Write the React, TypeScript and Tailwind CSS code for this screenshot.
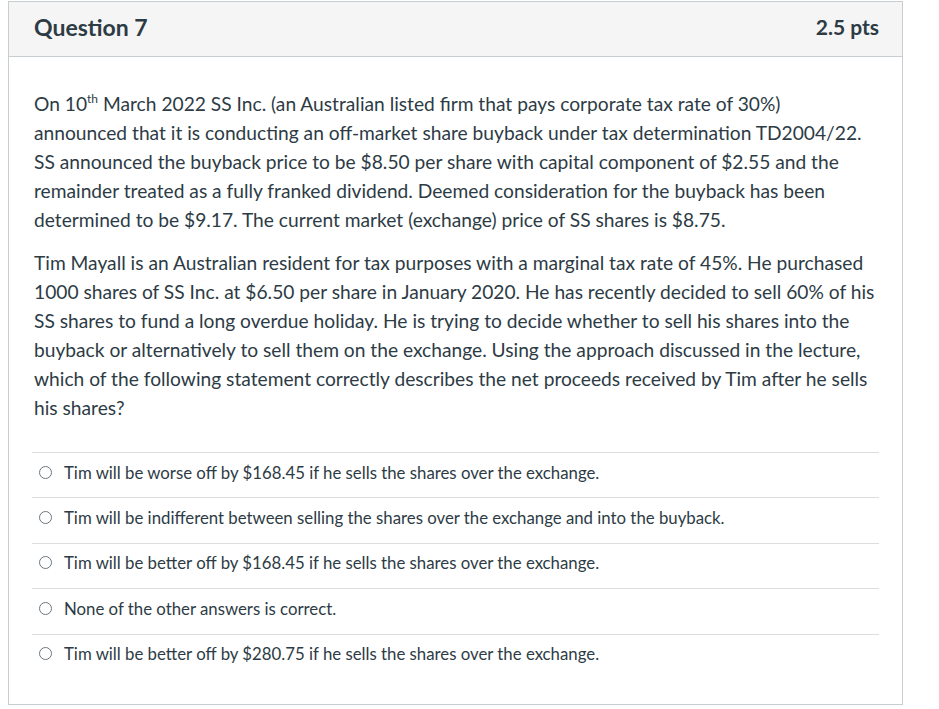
import React from "react";

const answers = [
  "Tim will be worse off by $168.45 if he sells the shares over the exchange.",
  "Tim will be indifferent between selling the shares over the exchange and into the buyback.",
  "Tim will be better off by $168.45 if he sells the shares over the exchange.",
  "None of the other answers is correct.",
  "Tim will be better off by $280.75 if he sells the shares over the exchange.",
];

export default function App() {
  return (
    <div className="w-[939px] h-[709px] bg-white pt-px pl-2" style={{ fontFamily: "Lato, 'Liberation Sans', sans-serif" }}>
      <div className="w-[895px] h-[704px] border border-[#c7cdd1] text-[#2d3b45]">
        <div className="h-[55px] bg-[#f5f5f5] border-b border-[#c7cdd1] flex items-center justify-between pl-[25px] pr-[23px] pb-[4px]">
          <span className="text-[23px] font-bold">Question 7</span>
          <span className="text-[21px] font-bold">2.5 pts</span>
        </div>
        <div className="pl-[25px] pr-[23px] pt-[32px]">
          <p className="text-[19.2px] leading-[29px] max-w-[841px]">
            On 10<span className="text-[12px] relative top-[-8px] leading-none">th</span> March 2022 SS Inc. (an Australian listed firm that pays corporate tax rate of 30%) announced that it is conducting an off-market share buyback under tax determination TD2004/22. SS announced the buyback price to be $8.50 per share with capital component of $2.55 and the remainder treated as a fully franked dividend. Deemed consideration for the buyback has been determined to be $9.17. The current market (exchange) price of SS shares is $8.75.
          </p>
          <p className="text-[19.2px] leading-[29px] mt-[14px] max-w-[841px]">
            Tim Mayall is an Australian resident for tax purposes with a marginal tax rate of 45%. He purchased 1000 shares of SS Inc. at $6.50 per share in January 2020. He has recently decided to sell 60% of his SS shares to fund a long overdue holiday. He is trying to decide whether to sell his shares into the buyback or alternatively to sell them on the exchange. Using the approach discussed in the lecture, which of the following statement correctly describes the net proceeds received by Tim after he sells his shares?
          </p>
          <div className="mt-[30px] ml-[-2px]">
            {answers.map((a) => (
              <div key={a} className="border-t border-[#dcdfe2] h-[45.4px] flex items-center pl-[7px] pb-[6px]">
                <span className="w-[13px] h-[13px] rounded-full border border-[#6b7780] mr-[12px] shrink-0" />
                <span className="text-[16.8px]">{a}</span>
              </div>
            ))}
          </div>
        </div>
      </div>
    </div>
  );
}
